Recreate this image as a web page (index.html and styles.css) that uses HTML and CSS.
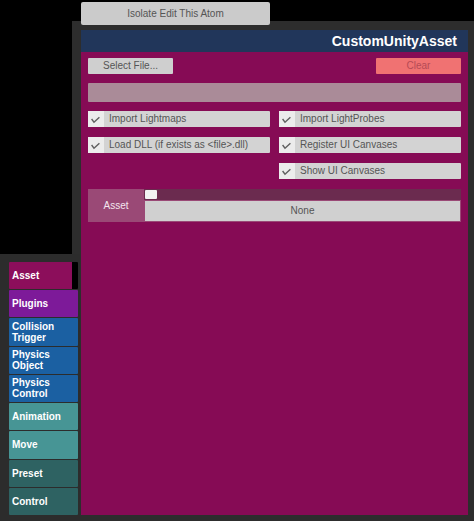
FILE: index.html
```html
<!DOCTYPE html>
<html lang="en">
<head>
    <meta charset="UTF-8">
    <meta name="viewport" content="width=device-width, initial-scale=1.0">
    <title>CustomUnityAsset</title>
    <link rel="stylesheet" href="styles.css">
</head>
<body>

<div class="isolate">Isolate Edit This Atom</div>

<div class="stage">
    <div class="side">
        <div class="tabs">
            <div class="tab tab-asset">Asset</div>
            <div class="tab tab-plugins">Plugins</div>
            <div class="tab tab-blue">Collision<br>Trigger</div>
            <div class="tab tab-blue">Physics<br>Object</div>
            <div class="tab tab-blue">Physics<br>Control</div>
            <div class="tab tab-teal">Animation</div>
            <div class="tab tab-teal">Move</div>
            <div class="tab tab-dark">Preset</div>
            <div class="tab tab-dark">Control</div>
        </div>
    </div>

    <div class="panel">
        <div class="header">CustomUnityAsset</div>
        <div class="content">
            <div class="btn-row">
                <div class="btn">Select File...</div>
                <div class="btn btn-clear">Clear</div>
            </div>
            <div class="path"></div>

            <div class="toggles">
                <div class="toggle">
                    <span class="check"><svg width="16" height="16" viewBox="0 0 16 16"><path d="M3.6 8 L6 11.2 L11.4 6.2" fill="none" stroke="#5f5f5f" stroke-width="1.4"/></svg></span>
                    <span class="label">Import Lightmaps</span>
                </div>
                <div class="toggle">
                    <span class="check"><svg width="16" height="16" viewBox="0 0 16 16"><path d="M3.6 8 L6 11.2 L11.4 6.2" fill="none" stroke="#5f5f5f" stroke-width="1.4"/></svg></span>
                    <span class="label">Import LightProbes</span>
                </div>
                <div class="toggle">
                    <span class="check"><svg width="16" height="16" viewBox="0 0 16 16"><path d="M3.6 8 L6 11.2 L11.4 6.2" fill="none" stroke="#5f5f5f" stroke-width="1.4"/></svg></span>
                    <span class="label">Load DLL (if exists as &lt;file&gt;.dll)</span>
                </div>
                <div class="toggle">
                    <span class="check"><svg width="16" height="16" viewBox="0 0 16 16"><path d="M3.6 8 L6 11.2 L11.4 6.2" fill="none" stroke="#5f5f5f" stroke-width="1.4"/></svg></span>
                    <span class="label">Register UI Canvases</span>
                </div>
                <div class="toggle col-2">
                    <span class="check"><svg width="16" height="16" viewBox="0 0 16 16"><path d="M3.6 8 L6 11.2 L11.4 6.2" fill="none" stroke="#5f5f5f" stroke-width="1.4"/></svg></span>
                    <span class="label">Show UI Canvases</span>
                </div>
            </div>

            <div class="asset-row">
                <div class="asset-label">Asset</div>
                <div class="asset-body">
                    <div class="slider"><span class="handle"></span></div>
                    <div class="dropdown">None</div>
                </div>
            </div>
        </div>
    </div>
</div>

</body>
</html>
```

FILE: styles.css
```css
body {
    margin: 0;
    width: 474px;
    height: 521px;
    overflow: hidden;
    background-color: #000;
    font-family: "Liberation Sans", Arial, sans-serif;
    font-size: 10px;
}

.isolate {
    position: relative;
    z-index: 2;
    width: 189px;
    height: 23px;
    margin: 2px 0 0 81px;
    background: #cbcbcb;
    color: #555;
    line-height: 23px;
    text-align: center;
    border-radius: 2px;
}

.stage {
    display: flex;
    height: 500px;
    margin-top: -4px;
}

.side {
    width: 72px;
    display: flex;
    flex-direction: column;
    position: relative;
    z-index: 1;
}

.tabs {
    margin-top: auto;
    width: 80px;
    height: 267px;
    box-sizing: border-box;
    padding: 8px 2px 6px 9px;
    background: #2c2c2c;
    display: grid;
    grid-template-rows: repeat(9, 1fr);
    row-gap: 1px;
}

.tab {
    display: flex;
    align-items: center;
    padding-left: 3px;
    color: #fff;
    font-weight: bold;
    line-height: 11px;
    border-radius: 1px;
}

.tab-asset {
    background: #8c0e5b;
    border-right: 6px solid #000;
}

.tab-plugins {
    background: #7d1a99;
}

.tab-blue {
    background: #1b60a2;
}

.tab-teal {
    background: #479595;
}

.tab-dark {
    background: #2e6262;
}

.panel {
    flex: 1;
    display: flex;
    flex-direction: column;
    background: #2d2d2d;
    padding: 9px 6px 6px 9px;
}

.header {
    height: 22px;
    background: #21365a;
    color: #fff;
    font-size: 14px;
    font-weight: bold;
    line-height: 23px;
    text-align: right;
    padding-right: 11px;
}

.content {
    flex: 1;
    background: #860b55;
    padding: 6px 7px;
}

.btn-row {
    display: flex;
    justify-content: space-between;
}

.btn {
    width: 85px;
    height: 16px;
    line-height: 16px;
    text-align: center;
    background: #cfcfcf;
    color: #555;
    border-radius: 1px;
}

.btn-clear {
    background: #f07272;
    color: #b54b55;
}

.path {
    height: 19px;
    margin-top: 9px;
    background: #aa8b98;
    border-radius: 1px;
}

.toggles {
    display: grid;
    grid-template-columns: 182px 182px;
    column-gap: 9px;
    row-gap: 10px;
    margin-top: 9px;
}

.toggle {
    display: flex;
    height: 16px;
    background: #d3d3d3;
    color: #555;
    border-radius: 1px;
}

.col-2 {
    grid-column: 2;
}

.check {
    width: 16px;
    height: 16px;
    background: #ececec;
}

.label {
    line-height: 16px;
    padding-left: 5px;
}

.asset-row {
    display: flex;
    height: 33px;
    margin-top: 10px;
    background: #9a4976;
}

.asset-label {
    width: 56px;
    color: #f2e6ee;
    line-height: 34px;
    text-align: center;
}

.asset-body {
    flex: 1;
    display: flex;
    flex-direction: column;
}

.slider {
    height: 11px;
    background: #6b2b4f;
    padding: 1px 0 0 1px;
    box-sizing: border-box;
}

.handle {
    display: block;
    width: 12px;
    height: 9px;
    background: #f2f2f2;
    border-radius: 1px;
}

.dropdown {
    flex: 1;
    margin: 1px 1px 1px 1px;
    background: #d0d0d0;
    color: #555;
    line-height: 20px;
    text-align: center;
}
```
